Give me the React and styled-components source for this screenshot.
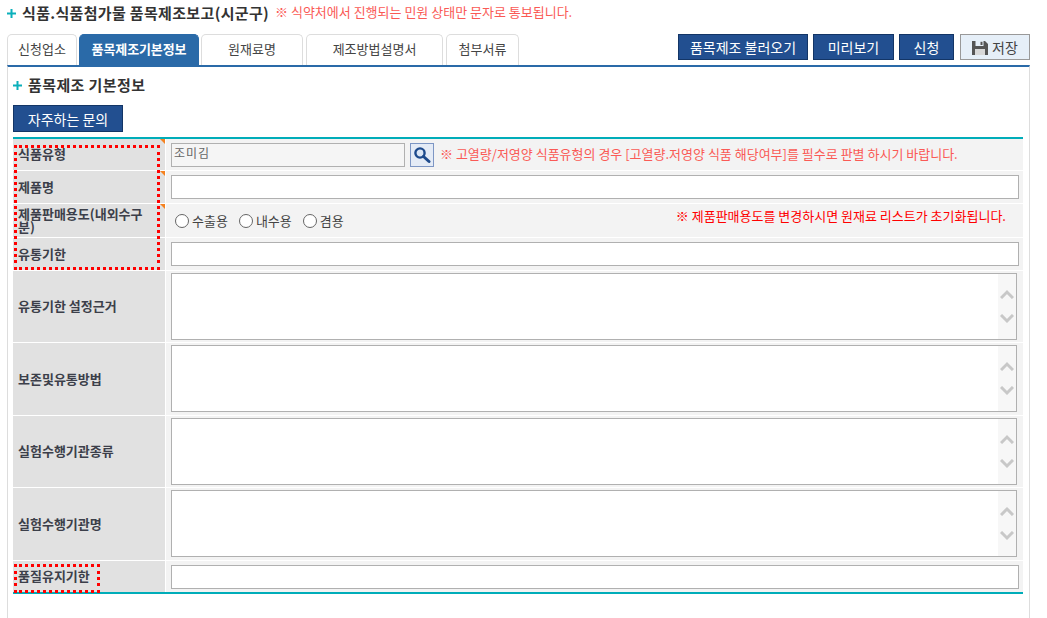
import React from "react";
import styled, { createGlobalStyle } from "styled-components";

const Global = createGlobalStyle`
  html, body { margin: 0; padding: 0; background: #fff; }
  body { font-family: "Noto Sans CJK KR", "Noto Sans", sans-serif; color: #333; overflow: hidden; }
  #root { width: 1047px; height: 618px; overflow: hidden; }
  * { box-sizing: border-box; }
`;

const Page = styled.div`
  padding: 0 0 0 7px;
  width: 1047px;
`;
const TitleBar = styled.div`
  height: 34px;
  display: flex;
  align-items: flex-start;
  padding-top: 2px;
`;
const PlusBox = styled.span`
  flex: none;
  width: ${p => p.$w}px;
  height: 22px;
  display: flex;
  align-items: center;
`;
const Title = styled.h1`
  margin: 0;
  font-size: 15px;
  line-height: 22px;
  font-weight: 700;
  color: #333;
  letter-spacing: 0.33px;
`;
const TopNote = styled.span`
  margin-left: 6px;
  font-size: 13px;
  line-height: 20px;
  color: #fa5a55;
`;
const TabBar = styled.div`
  height: 31px;
  display: flex;
  align-items: flex-start;
  justify-content: space-between;
  width: 1023px;
`;
const Tabs = styled.div`
  display: flex;
`;
const Tab = styled.div`
  width: ${p => p.$w}px;
  margin-right: ${p => p.$gap}px;
  height: 31px;
  border: 1px solid ${p => (p.$active ? "#2a6aa8" : "#ddd")};
  border-bottom: 0;
  border-radius: 5px 5px 0 0;
  background: ${p => (p.$active ? "#2a6aa8" : "#fff")};
  color: ${p => (p.$active ? "#fff" : "#444")};
  font-size: 13px;
  font-weight: ${p => (p.$active ? 700 : 400)};
  letter-spacing: ${p => (p.$active ? "-0.1px" : "0")};
  display: flex;
  align-items: center;
  justify-content: center;
  padding-bottom: 3px;
`;
const Actions = styled.div`
  display: flex;
  gap: 5px;
`;
const NavyButton = styled.button`
  height: ${p => p.$h || 26}px;
  width: ${p => p.$w}px;
  background: #224f90;
  border: 1px solid #133566;
  color: #fff;
  font: 400 14px "Noto Sans CJK KR", sans-serif;
  padding: 0;
  display: flex;
  align-items: center;
  justify-content: center;
`;
const SaveButton = styled.button`
  height: 26px;
  width: 70px;
  margin-left: 1px;
  background: #e6eff8;
  border: 1px solid #999;
  color: #444;
  font: 400 14px "Noto Sans CJK KR", sans-serif;
  padding: 0;
  display: flex;
  align-items: center;
  justify-content: center;
  gap: 4px;
`;
const Panel = styled.div`
  width: 1023px;
  height: 560px;
  border-top: 2px solid #2a6aa8;
  border-left: 1px solid #ddd;
  border-right: 1px solid #ddd;
  padding: 0 5px;
`;
const SectionHead = styled.div`
  height: 38px;
  display: flex;
  align-items: center;
  padding-bottom: 2px;
`;
const SectionTitle = styled.h2`
  margin: 0;
  font-size: 15px;
  line-height: 20px;
  font-weight: 700;
  color: #333;
  letter-spacing: 0.4px;
`;
const Table = styled.div`
  position: relative;
  width: 1010px;
  margin-top: 5px;
  border-top: 2px solid #00adb9;
  border-bottom: 2px solid #00adb9;
`;
const Row = styled.div`
  display: flex;
  height: ${p => p.$h}px;
  margin-bottom: ${p => (p.$last ? 0 : 1)}px;
`;
const Head = styled.div`
  position: relative;
  width: 152px;
  margin-right: 1px;
  flex: none;
  background: #e1e1e1;
  display: flex;
  align-items: center;
  padding: 0 15px 2px 5px;
  font-size: 13px;
  line-height: 13px;
  font-weight: 700;
  color: #3c3f4a;
  letter-spacing: 0;
  word-break: break-all;
  ${p => p.$mark && `
    &::after {
      content: "";
      position: absolute;
      top: 0;
      right: 0;
      border-top: 5px solid #f58220;
      border-left: 5px solid transparent;
    }
  `}
`;
const Cell = styled.div`
  flex: 1;
  min-width: 0;
  background: #f3f3f3;
  display: flex;
  align-items: center;
  padding: 0 4px 0 5px;
`;
const AreaCell = styled.div`
  flex: 1;
  min-width: 0;
  background: #f3f3f3;
  padding: 2px 4px 0 5px;
`;
const TextInput = styled.input`
  width: ${p => p.$w || "848px"};
  height: 24px;
  flex: none;
  border: 1px solid #b0b0b0;
  background: ${p => (p.$ro ? "#f5f5f5" : "#fff")};
  color: #666;
  font: 400 12px "Noto Sans CJK KR", sans-serif;
  letter-spacing: 1px;
  padding: 0 2px 4px;
  border-radius: 0;
  outline: none;
`;
const SearchBtn = styled.div`
  width: 24px;
  height: 24px;
  flex: none;
  margin-left: 5px;
  border: 1px solid #7d96c4;
  background: #e4ebf6;
  display: flex;
  align-items: center;
  justify-content: center;
`;
const Note = styled.span`
  margin-left: 6px;
  margin-bottom: 2px;
  font-size: 13px;
  color: #fa5a55;
  white-space: nowrap;
`;
const ResetNote = styled.span`
  margin-right: 13px;
  margin-bottom: 11px;
  font-size: 13px;
  color: #f00;
  white-space: nowrap;
`;
const Radios = styled.div`
  display: flex;
  align-items: center;
  gap: 11px;
  padding-left: 4px;
  font-size: 13px;
  color: #444;
  flex: 1;
`;
const RadioLabel = styled.label`
  display: flex;
  align-items: center;
  gap: 3px;
`;
const Radio = styled.input`
  margin: 0;
  width: 14px;
  height: 14px;
  appearance: none;
  border: 1px solid #666;
  border-radius: 50%;
  background: #fff;
`;
const AreaBox = styled.div`
  width: 846px;
  height: 67px;
  border: 1px solid #b0b0b0;
  background: #fff;
  display: flex;
`;
const AreaText = styled.div`
  flex: 1;
`;
const FakeScroll = styled.div`
  width: 18px;
  background: #f7f7f7;
  display: flex;
  flex-direction: column;
  align-items: center;
  justify-content: center;
  gap: 15px;
`;
const Dotted = styled.div`
  position: absolute;
  left: 1px;
  top: ${p => p.$top}px;
  width: ${p => p.$w}px;
  height: ${p => p.$h}px;
  border: 3px dotted #f00;
  pointer-events: none;
`;

const PlusIcon = () => (
  <svg width="9" height="9" viewBox="0 0 9 9">
    <path d="M3.5 0 H5.5 V3.5 H9 V5.5 H5.5 V9 H3.5 V5.5 H0 V3.5 H3.5 Z" fill="#0bb0bb" />
  </svg>
);

const Chev = ({ up }) => (
  <svg width="14" height="10" viewBox="0 0 14 10" fill="none" stroke="#c8c8c8" strokeWidth="3">
    <path d={up ? "M1 9 L7 3 L13 9" : "M1 1 L7 7 L13 1"} />
  </svg>
);

const Area = () => (
  <AreaBox>
    <AreaText />
    <FakeScroll>
      <Chev up />
      <Chev />
    </FakeScroll>
  </AreaBox>
);

const SearchIcon = () => (
  <svg width="18" height="18" viewBox="0 0 18 18">
    <circle cx="7" cy="7" r="4.6" fill="#dbe6f5" stroke="#1d4a8c" strokeWidth="2.4" />
    <path d="M10.5 10.5 L16 15.5" stroke="#1d4a8c" strokeWidth="3" strokeLinecap="round" />
  </svg>
);

const SaveIcon = () => (
  <svg width="16" height="15" viewBox="0 0 16 15">
    <path d="M0 1 H13 L16 4 V15 H0 Z" fill="#555" />
    <rect x="3.5" y="1" width="8" height="5" fill="#e6eff8" />
    <rect x="8.5" y="1.8" width="2" height="3.2" fill="#555" />
    <rect x="3" y="9" width="10" height="6" fill="#d8d8d8" />
  </svg>
);

export default function App() {
  return (
    <Page>
      <Global />
      <TitleBar>
        <PlusBox $w={15}><PlusIcon /></PlusBox>
        <Title>식품.식품첨가물 품목제조보고(시군구)</Title>
        <TopNote>※ 식약처에서 진행되는 민원 상태만 문자로 통보됩니다.</TopNote>
      </TitleBar>
      <TabBar>
        <Tabs>
          <Tab $w={70} $gap={2}>신청업소</Tab>
          <Tab $w={120} $gap={2} $active>품목제조기본정보</Tab>
          <Tab $w={102} $gap={3}>원재료명</Tab>
          <Tab $w={137} $gap={3}>제조방법설명서</Tab>
          <Tab $w={73} $gap={0}>첨부서류</Tab>
        </Tabs>
        <Actions>
          <NavyButton $w={130}>품목제조 불러오기</NavyButton>
          <NavyButton $w={81}>미리보기</NavyButton>
          <NavyButton $w={55}>신청</NavyButton>
          <SaveButton><SaveIcon />저장</SaveButton>
        </Actions>
      </TabBar>
      <Panel>
        <SectionHead>
          <PlusBox $w={15}><PlusIcon /></PlusBox>
          <SectionTitle>품목제조 기본정보</SectionTitle>
        </SectionHead>
        <NavyButton $w={110} $h={27}>자주하는 문의</NavyButton>
        <Table>
          <Row $h={31}>
            <Head $mark>식품유형</Head>
            <Cell>
              <TextInput $ro $w="234px" readOnly defaultValue="조미김" />
              <SearchBtn><SearchIcon /></SearchBtn>
              <Note>※ 고열량/저영양 식품유형의 경우 [고열량.저영양 식품 해당여부]를 필수로 판별 하시기 바랍니다.</Note>
            </Cell>
          </Row>
          <Row $h={32}>
            <Head $mark>제품명</Head>
            <Cell><TextInput /></Cell>
          </Row>
          <Row $h={33}>
            <Head $mark>제품판매용도(내외수구분)</Head>
            <Cell>
              <Radios>
                <RadioLabel><Radio type="radio" />수출용</RadioLabel>
                <RadioLabel><Radio type="radio" />내수용</RadioLabel>
                <RadioLabel><Radio type="radio" />겸용</RadioLabel>
              </Radios>
              <ResetNote>※ 제품판매용도를 변경하시면 원재료 리스트가 초기화됩니다.</ResetNote>
            </Cell>
          </Row>
          <Row $h={32}>
            <Head>유통기한</Head>
            <Cell><TextInput /></Cell>
          </Row>
          <Row $h={71}>
            <Head>유통기한 설정근거</Head>
            <AreaCell><Area /></AreaCell>
          </Row>
          <Row $h={72}>
            <Head>보존및유통방법</Head>
            <AreaCell><Area /></AreaCell>
          </Row>
          <Row $h={71}>
            <Head>실험수행기관종류</Head>
            <AreaCell><Area /></AreaCell>
          </Row>
          <Row $h={72}>
            <Head>실험수행기관명</Head>
            <AreaCell><Area /></AreaCell>
          </Row>
          <Row $h={31} $last>
            <Head>품질유지기한</Head>
            <Cell><TextInput /></Cell>
          </Row>
          <Dotted $top={6} $w={146} $h={125} />
          <Dotted $top={425} $w={86} $h={29} />
        </Table>
      </Panel>
    </Page>
  );
}
